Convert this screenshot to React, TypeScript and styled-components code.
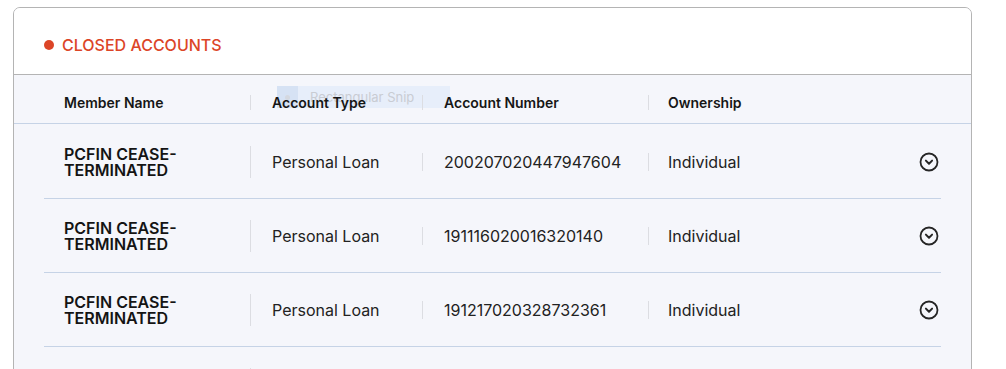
import React from "react";
import styled, { createGlobalStyle } from "styled-components";

const GlobalStyle = createGlobalStyle`
  html, body {
    margin: 0;
    padding: 0;
    background: #ffffff;
    font-family: Inter, "Noto Sans", sans-serif;
    color: #1c1c1c;
  }
`;

const Page = styled.div`
  padding: 7px 0 0 13px;
`;

const Card = styled.section`
  width: 959px;
  box-sizing: border-box;
  border: 1px solid #b4b4b4;
  border-radius: 7px;
  background: #f5f6fb;
  overflow: hidden;
`;

const CardHeader = styled.header`
  display: flex;
  align-items: center;
  gap: 8px;
  height: 67px;
  box-sizing: border-box;
  padding: 8px 30px 0;
  background: #ffffff;
  border-bottom: 1px solid #b4b4b4;
`;

const Dot = styled.span`
  width: 10px;
  height: 10px;
  border-radius: 50%;
  background: #dc4527;
`;

const Title = styled.h2`
  margin: 0;
  font-size: 16px;
  font-weight: 500;
  color: #dc4527;
  text-transform: uppercase;
`;

const HeadRow = styled.div`
  position: relative;
  display: grid;
  grid-template-columns: 207px 172px 226px 1fr 40px;
  align-items: center;
  height: 49px;
  box-sizing: border-box;
  padding: 7px 30px 0 30px;
  border-bottom: 1px solid #c6d3e6;
`;

const Body = styled.div`
  padding: 0 30px 0 30px;
`;

const Row = styled.div`
  display: grid;
  grid-template-columns: 207px 172px 226px 1fr 40px;
  align-items: center;
  height: 74px;
  box-sizing: border-box;
  border-bottom: 1px solid #c6d3e6;

  &:first-child {
    height: 75px;
    padding-top: 1px;
  }
`;

const Cell = styled.div<{ $divider?: boolean; $head?: boolean }>`
  position: relative;
  z-index: 1;
  padding: 0 20px 0 21px;
  border-right: ${(p) => (p.$divider ? "1px solid #dcdde2" : "none")};
  font-size: ${(p) => (p.$head ? "14px" : "16px")};
  font-weight: ${(p) => (p.$head ? 600 : 400)};
  line-height: ${(p) => (p.$head ? "15px" : "18px")};
  color: ${(p) => (p.$head ? "#161616" : "#222222")};
  white-space: nowrap;

  &:first-child {
    padding-left: 20px;
  }

  &:nth-child(4) {
    padding-left: 19px;
  }
`;

const NameCell = styled(Cell)`
  font-size: 16px;
  font-weight: 600;
  line-height: 16px;
  color: #141414;
  text-transform: uppercase;
  white-space: normal;
  padding-right: 50px;
`;

const IconCell = styled.div`
  display: flex;
  justify-content: flex-end;
  align-items: center;
  padding-right: 2px;
`;

const ExpandButton = styled.button`
  display: flex;
  padding: 0;
  border: 0;
  background: none;
  color: #262626;
  cursor: pointer;
`;

const SnipTip = styled.div`
  position: absolute;
  left: 263px;
  top: 11px;
  width: 173px;
  height: 22px;
  display: flex;
  align-items: center;
  gap: 12px;
  background: rgba(226, 235, 250, 0.75);
  font-size: 13px;
  color: #c9ccd3;
  z-index: 0;

  & > span:first-child {
    width: 21px;
    height: 22px;
    background: rgba(210, 222, 243, 0.8);
    display: flex;
    align-items: center;
    justify-content: center;
  }

  & > span:first-child::after {
    content: "";
    width: 5px;
    height: 5px;
    border-radius: 50%;
    background: #d4d8e0;
  }
`;

interface Account {
  name: string;
  type: string;
  number: string;
  ownership: string;
}

const accounts: Account[] = [
  { name: "PCFIN CEASE-TERMINATED", type: "Personal Loan", number: "200207020447947604", ownership: "Individual" },
  { name: "PCFIN CEASE-TERMINATED", type: "Personal Loan", number: "191116020016320140", ownership: "Individual" },
  { name: "PCFIN CEASE-TERMINATED", type: "Personal Loan", number: "191217020328732361", ownership: "Individual" },
  { name: "PCFIN CEASE-TERMINATED", type: "Personal Loan", number: "191009020114582307", ownership: "Individual" },
];

const ChevronCircle = () => (
  <svg width="20" height="20" viewBox="0 0 20 20" fill="none">
    <circle cx="10" cy="10" r="8.5" stroke="currentColor" strokeWidth="1.8" />
    <path d="M6.9 8.6 10 11.7l3.1-3.1" stroke="currentColor" strokeWidth="2" strokeLinecap="round" strokeLinejoin="round" />
  </svg>
);

const App = () => {
  return (
    <Page>
      <GlobalStyle />
      <Card>
        <CardHeader>
          <Dot />
          <Title>Closed Accounts</Title>
        </CardHeader>
        <HeadRow>
          <Cell $head $divider>Member Name</Cell>
          <Cell $head $divider>Account Type</Cell>
          <Cell $head $divider>Account Number</Cell>
          <Cell $head>Ownership</Cell>
          <div />
          <SnipTip>
            <span />
            <span>Rectangular Snip</span>
          </SnipTip>
        </HeadRow>
        <Body>
          {accounts.map((a) => (
            <Row key={a.number}>
              <NameCell $divider>{a.name}</NameCell>
              <Cell $divider>{a.type}</Cell>
              <Cell $divider>{a.number}</Cell>
              <Cell>{a.ownership}</Cell>
              <IconCell>
                <ExpandButton aria-label="Expand">
                  <ChevronCircle />
                </ExpandButton>
              </IconCell>
            </Row>
          ))}
        </Body>
      </Card>
    </Page>
  );
};

export default App;
